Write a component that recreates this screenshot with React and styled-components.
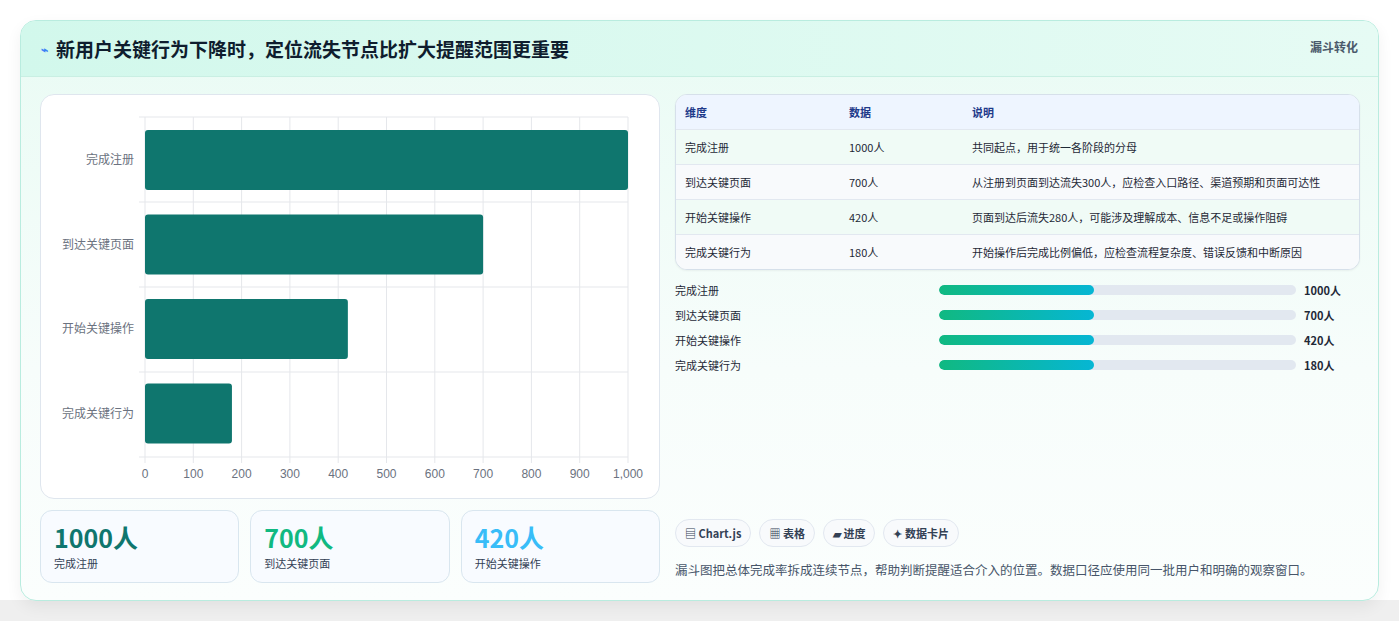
import React from "react";
import styled, { createGlobalStyle } from "styled-components";

const G = createGlobalStyle`
  body { margin: 0; background: linear-gradient(#fff 0, #fff 600px, #efefef 600px); font-family: "Noto Sans CJK SC", "Noto Sans", sans-serif; }
`;
const Page = styled.div`padding: 20px 20px 22px 20px;`;
const Card = styled.div`
  border: 1px solid #b9ecdf; border-radius: 16px; overflow: hidden;
  background: linear-gradient(180deg, #e9fbf4 0%, #f7fdfb 60%, #fbfefd 100%);
  box-shadow: 0 6px 16px rgba(0,0,0,0.06);
`;
const Header = styled.div`
  height: 55px; display: flex; align-items: center; justify-content: space-between;
  padding: 0 20px 0 20px; background: linear-gradient(90deg, #d2f8ec, #e6fbf4);
  border-bottom: 1px solid #c9efe3;
`;
const Title = styled.h1`margin: 0; font-size: 19px; font-weight: 700; color: #0f1d2e; display: flex; align-items: center; gap: 8px;`;
const Tag = styled.span`font-size: 12px; font-weight: 700; color: #4b5a6b; align-self: flex-start; margin-top: 17px;`;
const Body = styled.div`display: grid; grid-template-columns: 620px 685px; gap: 15px; padding: 17px 19px 17px 19px;`;
const Col = styled.div`display: flex; flex-direction: column;`;
const ChartBox = styled.div`background: #fff; border: 1px solid #dfe6ee; border-radius: 14px; height: 403px;`;
const Stats = styled.div`display: grid; grid-template-columns: repeat(3, 1fr); gap: 11px; margin-top: 11px;`;
const Stat = styled.div`border: 1px solid #d9e6ef; border-radius: 12px; background: #f8fbff; padding: 10px 13px; height: 51px;`;
const StatNum = styled.div`font-size: 25px; font-weight: 700; color: ${p => p.c}; line-height: 32px;`;
const StatLbl = styled.div`font-size: 11px; color: #334155; margin-top: 2px;`;
const Table = styled.div`border: 1px solid #d6e0ea; border-radius: 12px; overflow: hidden; background: #fff; box-shadow: 0 1px 2px rgba(0,0,0,0.05);`;
const Row = styled.div`
  display: grid; grid-template-columns: 164px 123px 1fr; padding: 8px 9px; min-height: 17px;
  font-size: 11px; line-height: 18px; color: #1f2937;
  background: ${p => p.h ? "#eef5ff" : p.odd ? "#f0fbf6" : "#f8fafc"};
  ${p => p.h && "color:#1e3a8a;font-weight:700;"}
  border-top: ${p => p.first ? "none" : "1px solid #e2e8f0"};
  & > span:last-child { padding-right: 10px; }
`;
const Bars = styled.div`display: flex; flex-direction: column; gap: 7px; margin-top: 11px;`;
const BarRow = styled.div`display: grid; grid-template-columns: 256px 357px 1fr; align-items: center; gap: 0 8px; font-size: 11px; color: #1f2937; height: 18px; & > b { font-weight: 700; }`;
const Track = styled.div`height: 10px; border-radius: 5px; background: #e2e8f0; overflow: hidden;`;
const Fill = styled.div`height: 100%; border-radius: 5px; background: linear-gradient(90deg, #10b981, #06b6d4);`;
const Chips = styled.div`display: flex; gap: 8px; margin-top: auto;`;
const Chip = styled.span`font-size: 11px; font-weight: 700; color: #334155; border: 1px solid #e2e8f0; background: #f8fafc; border-radius: 14px; padding: 5px 9px;`;
const Note = styled.p`margin: 13px 0 4px; font-size: 12.5px; color: #475569;`;

const cats = [["完成注册",1000],["到达关键页面",700],["开始关键操作",420],["完成关键行为",180]];
const sx = v => 104 + v * 0.483;

function Chart() {
  return (
    <svg width="619" height="403" style={{display:"block"}}>
      {Array.from({length:11}).map((_,i)=>(
        <g key={i}>
          <line x1={sx(i*100)} x2={sx(i*100)} y1="22" y2="368" stroke="#e5e7eb"/>
          <text x={sx(i*100)} y="383" fontSize="12" fill="#6b7280" textAnchor="middle" fontFamily="Liberation Sans">{i===10?"1,000":i*100}</text>
        </g>
      ))}
      {[22,107,192,277,362].map(y=><line key={y} x1="98" x2="587" y1={y} y2={y} stroke="#e5e7eb"/>)}
      {cats.map(([n,v],i)=>(
        <g key={n}>
          <rect x="104" y={35+i*84.5} width={v*0.483} height="60" rx="3" fill="#0f766e"/>
          <text x="93" y={69+i*84.5} fontSize="12" fill="#6b7280" textAnchor="end">{n}</text>
        </g>
      ))}
    </svg>
  );
}

const rows = [
  ["完成注册","1000人","共同起点，用于统一各阶段的分母"],
  ["到达关键页面","700人","从注册到页面到达流失300人，应检查入口路径、渠道预期和页面可达性"],
  ["开始关键操作","420人","页面到达后流失280人，可能涉及理解成本、信息不足或操作阻碍"],
  ["完成关键行为","180人","开始操作后完成比例偏低，应检查流程复杂度、错误反馈和中断原因"],
];

export default function App() {
  return (
    <Page>
      <G/>
      <Card>
        <Header>
          <Title><span style={{color:"#3b82f6",fontSize:12}}>⌁</span>新用户关键行为下降时，定位流失节点比扩大提醒范围更重要</Title>
          <Tag>漏斗转化</Tag>
        </Header>
        <Body>
          <Col>
            <ChartBox><Chart/></ChartBox>
            <Stats>
              <Stat><StatNum c="#0f766e">1000人</StatNum><StatLbl>完成注册</StatLbl></Stat>
              <Stat><StatNum c="#10b981">700人</StatNum><StatLbl>到达关键页面</StatLbl></Stat>
              <Stat><StatNum c="#38bdf8">420人</StatNum><StatLbl>开始关键操作</StatLbl></Stat>
            </Stats>
          </Col>
          <Col>
            <Table>
              <Row h first><span>维度</span><span>数据</span><span>说明</span></Row>
              {rows.map((r,i)=><Row key={i} odd={i%2===0}><span>{r[0]}</span><span>{r[1]}</span><span>{r[2]}</span></Row>)}
            </Table>
            <Bars>
              {cats.map(([n,v])=>(
                <BarRow key={n}><span>{n}</span><Track><Fill style={{width:"43.5%"}}/></Track><b>{v}人</b></BarRow>
              ))}
            </Bars>
            <Chips>
              <Chip>▤ Chart.js</Chip><Chip>▦ 表格</Chip><Chip>▰ 进度</Chip><Chip>✦ 数据卡片</Chip>
            </Chips>
            <Note>漏斗图把总体完成率拆成连续节点，帮助判断提醒适合介入的位置。数据口径应使用同一批用户和明确的观察窗口。</Note>
          </Col>
        </Body>
      </Card>
    </Page>
  );
}
